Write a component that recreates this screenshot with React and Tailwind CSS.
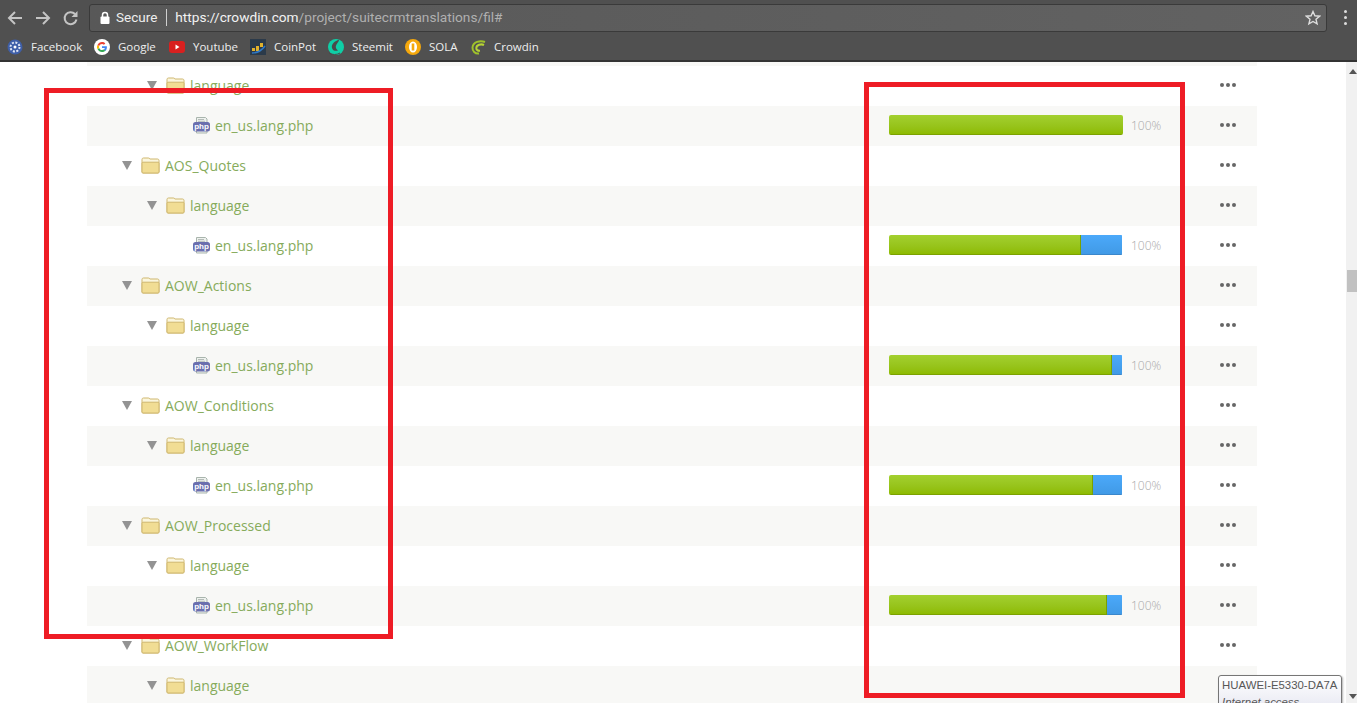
const rows = [
  { t: "language", d: 1 },
  { t: "en_us.lang.php", d: 2, g: 100 },
  { t: "AOS_Quotes", d: 0 },
  { t: "language", d: 1 },
  { t: "en_us.lang.php", d: 2, g: 192, b: true },
  { t: "AOW_Actions", d: 0 },
  { t: "language", d: 1 },
  { t: "en_us.lang.php", d: 2, g: 223, b: true },
  { t: "AOW_Conditions", d: 0 },
  { t: "language", d: 1 },
  { t: "en_us.lang.php", d: 2, g: 204, b: true },
  { t: "AOW_Processed", d: 0 },
  { t: "language", d: 1 },
  { t: "en_us.lang.php", d: 2, g: 218, b: true },
  { t: "AOW_WorkFlow", d: 0 },
  { t: "language", d: 1 },
];

const Tri = () => (
  <svg width="10" height="9" viewBox="0 0 10 9" className="shrink-0 mt-px"><path d="M0 0h10L5 9z" fill="#939393" /></svg>
);
const Folder = () => (
  <svg width="19" height="17" viewBox="0 0 19 17" className="shrink-0">
    <path d="M1 15V2.5C1 1.6 1.6 1 2.5 1h5c.7 0 1 .3 1.3 1h7.700c.8 0 1.500.6 1.500 1.500V15c0 .6-.4 1-1 1H2c-.6 0-1-.4-1-1z" fill="#fbf6de" stroke="#cfb76e" />
    <path d="M1 15V6.200c0-.6.4-1 1-1h15c.6 0 1 .4 1 1V15c0 .6-.4 1-1 1H2c-.6 0-1-.4-1-1z" fill="#f1dd94" stroke="#cfb76e" />
  </svg>
);
const Php = () => (
  <svg width="17" height="18" viewBox="0 0 17 18" className="shrink-0">
    <path d="M3.500 7V1.500h9l1.500 1.500v4M3.500 14v3h10.500v-3" fill="#eef1ee" stroke="#a9b5ad" />
    <path d="M5 3.500h6M5 5.300h7" stroke="#b5bdb8" />
    <rect x="0" y="6" width="17" height="9.500" rx="2.500" fill="#6a6fae" />
    <text x="8.500" y="13" textAnchor="middle" fontSize="8" fontWeight="700" fill="#fff" fontFamily="Liberation Sans, sans-serif">php</text>
  </svg>
);

const Row = ({ r, i }) => {
  const pad = r.d === 0 ? "pl-[35px]" : r.d === 1 ? "pl-[60px]" : "pl-[106px]";
  return (
    <div className={`flex items-center h-10 pb-[2px] shrink-0 ${i % 2 ? "bg-[#f8f8f6]" : "bg-white"}`}>
      <div className={`flex items-center w-[802px] ${pad}`}>
        {r.d < 2 ? (
          <>
            <Tri />
            <span className="ml-[9px]"><Folder /></span>
            <span className="ml-[5px] text-[14px] text-[#86ab5b]">{r.t}</span>
          </>
        ) : (
          <>
            <Php />
            <span className="ml-[5px] text-[14px] text-[#86ab5b]">{r.t}</span>
          </>
        )}
      </div>
      <div className="w-[327px] flex items-center">
        {r.g && (
          <>
            <div className="flex w-[234px] h-5 rounded-[2px] overflow-hidden">
              <div className={`${r.b ? "" : "flex-1"} h-full bg-gradient-to-b from-[#a3d02f] to-[#8ebb00] border-b border-[#7ba100] ${r.b ? "border-r" : ""}`} style={r.b ? { width: r.g } : undefined} />
              {r.b && <div className="flex-1 mr-px h-full bg-gradient-to-b from-[#4ba9fa] to-[#419ae6] border-b border-[#3a87cb]" />}
            </div>
            <span className="ml-[8px] mt-[2px] text-[12px] font-light text-[#a9a9a9]">100%</span>
          </>
        )}
      </div>
      <div className="flex gap-[2px] ml-[4px]">
        <span className="w-1 h-1 rounded-full bg-[#666]" />
        <span className="w-1 h-1 rounded-full bg-[#666]" />
        <span className="w-1 h-1 rounded-full bg-[#666]" />
      </div>
    </div>
  );
};

const bookmarks = [
  { n: "Facebook", w: "w-[87px]", i: <svg width="16" height="16" viewBox="0 0 16 16"><circle cx="8" cy="8" r="7.500" fill="#3f5fa8" /><circle cx="8" cy="8" r="4.500" fill="none" stroke="#dfe6f5" strokeWidth="2" strokeDasharray="2 1.500" /><circle cx="8" cy="8" r="1.500" fill="#fff" /></svg> },
  { n: "Google", w: "w-[75px]", i: <svg width="16" height="16" viewBox="0 0 16 16"><circle cx="8" cy="8" r="8" fill="#fff" /><path d="M12.900 8.200c0-.4 0-.7-.1-1H8v1.900h2.800c-.1.700-.5 1.200-1 1.600l1.600 1.200c.9-.9 1.500-2.200 1.500-3.700z" fill="#4285f4" /><path d="M8 13c1.400 0 2.500-.5 3.400-1.300L9.800 10.500c-.5.300-1 .5-1.800.5-1.300 0-2.400-.9-2.800-2.100L3.500 10.100C4.400 11.900 6.100 13 8 13z" fill="#34a853" /><path d="M5.200 8.900c-.2-.6-.2-1.200 0-1.800L3.500 5.900c-.7 1.300-.7 2.900 0 4.200z" fill="#fbbc05" /><path d="M8 5c.8 0 1.400.3 1.900.8l1.400-1.400C10.500 3.500 9.300 3 8 3 6.100 3 4.400 4.100 3.500 5.900l1.700 1.200C5.600 5.900 6.700 5 8 5z" fill="#ea4335" /></svg> },
  { n: "Youtube", w: "w-[81px]", i: <svg width="16" height="16" viewBox="0 0 16 16"><rect x="0" y="2" width="16" height="12" rx="3" fill="#d8201f" /><path d="M6.500 5.500v5L10.500 8z" fill="#fff" /></svg> },
  { n: "CoinPot", w: "w-[78px]", i: <svg width="16" height="16" viewBox="0 0 16 16"><rect width="16" height="16" fill="#2b3a4a" /><rect x="2" y="9" width="3" height="3" fill="#e0b12d" /><rect x="6" y="7" width="3" height="5" fill="#e0b12d" /><rect x="10" y="4" width="3" height="4" fill="#e0b12d" /><path d="M2 14 Q10 14 15 7" stroke="#2f79c9" strokeWidth="1.500" fill="none" /></svg> },
  { n: "Steemit", w: "w-[77px]", i: <svg width="16" height="16" viewBox="0 0 16 16"><circle cx="8" cy="8" r="8" fill="#0fcfa6" /><path d="M11 0.500C7 2 3 5 4 9c.7 2.800 3.500 3.200 6 2.500C8 10 7 8 8.500 5.500 9.500 3.800 11 2.500 11 .5z" fill="#4a4a4a" /><path d="M1 14c3 2 8 2 11 0" stroke="#4a4a4a" strokeWidth="1" fill="none" /></svg> },
  { n: "SOLA", w: "w-[66px]", i: <svg width="16" height="16" viewBox="0 0 16 16"><circle cx="8" cy="8" r="8" fill="#f5a80c" /><ellipse cx="8" cy="8" rx="4" ry="5.500" fill="#fff" /><rect x="6.700" y="4.500" width="2.600" height="7" fill="#f5a80c" /></svg> },
  { n: "Crowdin", w: "", i: <svg width="16" height="16" viewBox="0 0 16 16"><path d="M14 3C9 1 2 3 1.500 8.500 1.300 12 4 15 8 14.500" stroke="#9fc22a" strokeWidth="2" fill="none" /><path d="M13 6C10 4.500 5.500 6 5.300 9c-.1 1.800 1.500 3 3.700 2.800" stroke="#b6d335" strokeWidth="2" fill="none" /></svg> },
];

export default function App() {
  return (
    <div className="relative w-[1357px] h-[703px] overflow-hidden flex flex-col bg-white font-['Open_Sans',sans-serif]">
      <header className="h-[62px] shrink-0 bg-[#505050] border-b-2 border-[#333] flex flex-col">
        <div className="h-[35px] flex items-center pl-[6px] pr-[10px]">
          <svg width="18" height="18" viewBox="0 0 18 18" fill="none" stroke="#c4c4c4" strokeWidth="2"><path d="M16 9H3M9 3 3 9l6 6" /></svg>
          <svg width="18" height="18" viewBox="0 0 18 18" fill="none" stroke="#c4c4c4" strokeWidth="2" className="ml-[10px]"><path d="M2 9h13M9 3l6 6-6 6" /></svg>
          <svg width="16" height="16" viewBox="0 0 16 16" fill="none" stroke="#c4c4c4" strokeWidth="2" className="ml-[11px]"><path d="M13.500 9.500A6 6 0 1 1 12 4" /><path d="M14.500 1v6h-6z" fill="#c4c4c4" stroke="none" /></svg>
          <div className="ml-[10px] flex-1 h-[28px] rounded-[3px] border border-[#3a3a3a] bg-gradient-to-r from-[#585858] to-[#626262] flex items-center pl-[9px] pr-[4px]">
            <svg width="12" height="14" viewBox="0 0 12 14"><rect x="1.500" y="5.500" width="9" height="7.500" rx="1" fill="#fff" /><path d="M3.500 6V4a2.500 2.500 0 0 1 5 0v2" stroke="#fff" strokeWidth="1.500" fill="none" /></svg>
            <span className="ml-[5px] text-[13.500px] text-[#eee] font-['Roboto',sans-serif]">Secure</span>
            <span className="ml-[9px] w-px h-[17px] bg-[#cfcfcf]" />
            <span className="ml-[8px] text-[13.700px] text-[#f2f2f2] font-['Roboto',sans-serif]">https://crowdin.com<span className="text-[#b0b0b0]">/project/suitecrmtranslations/fil#</span></span>
            <svg width="16" height="16" viewBox="0 0 16 16" fill="none" stroke="#dedede" strokeWidth="1.400" className="ml-auto mr-[1px]"><path d="M8 1.500l1.900 4.300 4.700.4-3.600 3.100 1.100 4.600L8 11.500l-4.100 2.400L5 9.300 1.400 6.200l4.700-.4z" /></svg>
          </div>
          <div className="ml-[17px] flex flex-col gap-[3px]">
            <span className="w-[3px] h-[3px] bg-[#ddd] rounded-full" />
            <span className="w-[3px] h-[3px] bg-[#ddd] rounded-full" />
            <span className="w-[3px] h-[3px] bg-[#ddd] rounded-full" />
          </div>
        </div>
        <div className="flex-1 flex items-start pt-[2px] pl-[7px] text-[11.500px] text-[#eee]">
          {bookmarks.map((b) => (
            <div key={b.n} className={`flex items-center h-[20px] ${b.w}`}>
              {b.i}
              <span className={b.n === "Crowdin" ? "ml-[7px]" : "ml-[8px]"}>{b.n}</span>
            </div>
          ))}
        </div>
      </header>
      <div className="flex-1 flex min-h-0">
        <main className="flex-1 pl-[87px] pr-[89px] flex flex-col overflow-hidden">
          <div className="h-1 shrink-0 bg-[#f8f8f6]" />
          {rows.map((r, i) => <Row key={i} r={r} i={i} />)}
        </main>
        <aside className="w-[11px] shrink-0 bg-[#f1f1f1] flex flex-col items-end">
          <svg width="8" height="5" viewBox="0 0 8 5" className="mt-[7px]"><path d="M0 5 4 0l4 5z" fill="#555" /></svg>
          <div className="mt-[196px] w-[10px] h-[22px] bg-[#c1c1c1]" />
          <svg width="8" height="5" viewBox="0 0 8 5" className="mt-[402px]"><path d="M0 0 4 5l4-5z" fill="#555" /></svg>
        </aside>
      </div>
      <div className="absolute left-[44px] top-[88px] w-[349px] h-[551px] border-[5px] border-[#ee1c25]" />
      <div className="absolute left-[864px] top-[82px] w-[321px] h-[616px] border-[5px] border-[#ee1c25]" />
      <div className="absolute left-[1218px] top-[675px] w-[124px] h-[40px] border border-[#767676] rounded-[3px] bg-gradient-to-b from-white to-[#e4e5f0] px-[3px] pt-[1px] text-[11.400px] leading-[17px] text-[#575757] font-['Liberation_Sans',sans-serif] shadow-[1px_1px_2px_rgba(0,0,0,0.3)]">
        <div className="whitespace-nowrap">HUAWEI-E5330-DA7A</div>
        <div className="italic whitespace-nowrap">Internet access</div>
      </div>
    </div>
  );
}
